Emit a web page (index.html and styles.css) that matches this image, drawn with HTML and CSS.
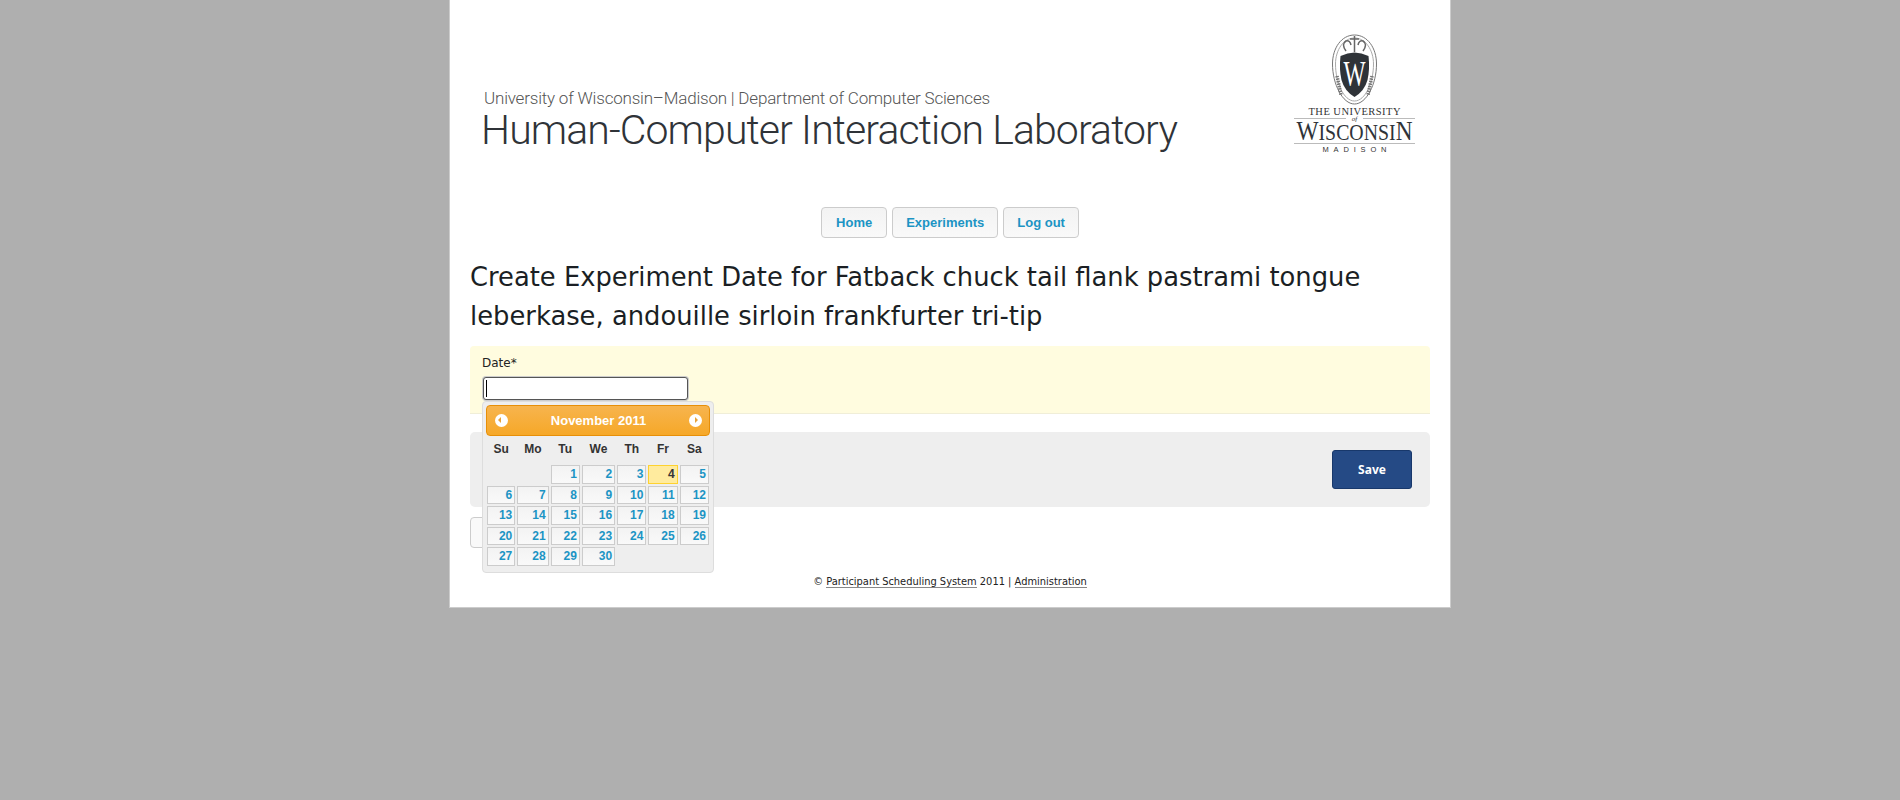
FILE: index.html
```html
<!DOCTYPE html>
<html lang="en">

<head>
    <meta charset="UTF-8">
    <title>Create Experiment Date</title>
    <link rel="stylesheet" href="styles.css">
</head>

<body>
    <div class="page">
        <div class="masthead">
            <div class="lab-name">
                <div class="lab-dept">University of Wisconsin–Madison | Department of Computer Sciences</div>
                <div class="lab-title">Human-Computer Interaction Laboratory</div>
            </div>
            <svg class="uw-logo" width="124" height="124" viewBox="0 0 124 124">
                <!-- crest -->
                <path d="M60.500 3c13 0 22 13 22 29 0 20-10 40-22 40s-22-20-22-40c0-16 9-29 22-29z" fill="#fff" stroke="#777" stroke-width="1" />
                <path d="M60.500 6c11 0 19 12 19 26 0 18-8 37-19 37s-19-19-19-37c0-14 8-26 19-26z" fill="none" stroke="#aaa" stroke-width="1" />
                <path d="M52 19q-5-7 0-10 4-1 5 4M69 19q5-7 0-10-4-1-5 4M60.500 4v16M56 7h9" fill="none" stroke="#666" stroke-width="1.500" />
                <path d="M46.500 24q14-7 28 0 1.500 13-1 24-3 11-13 17-10-6-13-17-2.500-11-1-24z" fill="#2f3338" />
                <path d="M43 44l4 19M78 44l-4 19" fill="none" stroke="#777" stroke-width="3.500" stroke-dasharray="1.500 1" />
                <text x="60.500" y="54" text-anchor="middle" class="crest-w" textLength="22" lengthAdjust="spacingAndGlyphs">W</text>
                <!-- wordmark -->
                <text x="60.500" y="83" text-anchor="middle" class="logo-the" textLength="92" lengthAdjust="spacing">THE UNIVERSITY</text>
                <path d="M0 86.500h52M69 86.500h52M0 111.500h121" stroke="#bbb" stroke-width="1" />
                <text x="60.500" y="89" text-anchor="middle" class="logo-of">of</text>
                <text x="60.500" y="108" text-anchor="middle" class="logo-wis" textLength="116" lengthAdjust="spacingAndGlyphs">W<tspan class="logo-small">ISCONSI</tspan>N</text>
                <text x="60.500" y="120" text-anchor="middle" class="logo-mad" textLength="64" lengthAdjust="spacing">MADISON</text>
            </svg>
        </div>

        <ul class="nav">
            <li><a href="#" class="nav-home">Home</a></li>
            <li><a href="#">Experiments</a></li>
            <li><a href="#">Log out</a></li>
        </ul>

        <h1>Create Experiment Date for Fatback chuck tail flank pastrami tongue leberkase, andouille sirloin frankfurter tri-tip</h1>

        <form class="date-form">
            <div class="field">
                <label for="date">Date*</label>
                <input type="text" id="date">
                <span class="caret"></span>

                <div class="datepicker">
                    <div class="dp-header">
                        <span class="dp-arrow dp-prev"></span>
                        <span class="dp-month">November 2011</span>
                        <span class="dp-arrow dp-next"></span>
                    </div>
                    <table class="dp-table">
                        <thead>
                            <tr>
                                <th>Su</th>
                                <th>Mo</th>
                                <th>Tu</th>
                                <th>We</th>
                                <th>Th</th>
                                <th>Fr</th>
                                <th>Sa</th>
                            </tr>
                        </thead>
                        <tbody>
                            <tr>
                                <td></td>
                                <td></td>
                                <td><a href="#">1</a></td>
                                <td><a href="#">2</a></td>
                                <td><a href="#">3</a></td>
                                <td><a href="#" class="today">4</a></td>
                                <td><a href="#">5</a></td>
                            </tr>
                            <tr>
                                <td><a href="#">6</a></td>
                                <td><a href="#">7</a></td>
                                <td><a href="#">8</a></td>
                                <td><a href="#">9</a></td>
                                <td><a href="#">10</a></td>
                                <td><a href="#">11</a></td>
                                <td><a href="#">12</a></td>
                            </tr>
                            <tr>
                                <td><a href="#">13</a></td>
                                <td><a href="#">14</a></td>
                                <td><a href="#">15</a></td>
                                <td><a href="#">16</a></td>
                                <td><a href="#">17</a></td>
                                <td><a href="#">18</a></td>
                                <td><a href="#">19</a></td>
                            </tr>
                            <tr>
                                <td><a href="#">20</a></td>
                                <td><a href="#">21</a></td>
                                <td><a href="#">22</a></td>
                                <td><a href="#">23</a></td>
                                <td><a href="#">24</a></td>
                                <td><a href="#">25</a></td>
                                <td><a href="#">26</a></td>
                            </tr>
                            <tr>
                                <td><a href="#">27</a></td>
                                <td><a href="#">28</a></td>
                                <td><a href="#">29</a></td>
                                <td><a href="#">30</a></td>
                                <td></td>
                                <td></td>
                                <td></td>
                            </tr>
                        </tbody>
                    </table>
                </div>
            </div>

            <div class="actions">
                <button type="button" class="save">Save</button>
            </div>
        </form>

        <!-- label of this button sits behind the open datepicker -->
        <a href="#" class="back" aria-label="Back"></a>

        <div class="footer">
            © <a href="#">Participant Scheduling System</a> 2011 | <a href="#">Administration</a>
        </div>
    </div>
</body>

</html>
```

FILE: styles.css
```css
html,
body {
    margin: 0;
    padding: 0;
}

body {
    height: 800px;
    overflow: hidden;
    background: #afafaf;
    font-family: "DejaVu Sans", sans-serif;
    color: #222;
}

.page {
    box-sizing: border-box;
    width: 1002px;
    height: 608px;
    margin: 0 auto;
    padding: 0 20px;
    background: #fff;
    border: 1px solid #ccc;
    border-top: none;
}

/* header */
.masthead {
    display: flex;
    justify-content: space-between;
    height: 207px;
}

.lab-name {
    padding: 86px 0 0 11px;
    font-family: Roboto, "Liberation Sans", sans-serif;
    font-weight: 300;
}

.lab-dept {
    margin-left: 3px;
    font-size: 17px;
    line-height: 24px;
    letter-spacing: -0.200px;
    color: #555;
}

.lab-title {
    font-size: 41px;
    line-height: 40px;
    letter-spacing: -0.900px;
    color: #2f3338;
}

.uw-logo {
    margin: 32px 12px 0 0;
}

.crest-w {
    font-family: "Liberation Serif", serif;
    font-size: 35px;
    fill: #fff;
}

.logo-the {
    font-family: "Liberation Serif", serif;
    font-size: 10.500px;
    fill: #333;
}

.logo-of {
    font-family: "Liberation Serif", serif;
    font-style: italic;
    font-size: 7px;
    fill: #333;
}

.logo-wis {
    font-family: "Liberation Serif", serif;
    font-size: 27px;
    fill: #2f3338;
}

.logo-small {
    font-size: 23px;
}

.logo-mad {
    font-family: "Liberation Sans", sans-serif;
    font-size: 7.500px;
    fill: #333;
}

/* nav */
.nav {
    display: flex;
    justify-content: center;
    gap: 5px;
    margin: 0;
    padding: 0;
    list-style: none;
}

.nav a {
    display: block;
    height: 29px;
    line-height: 29px;
    padding: 0 13px;
    background: linear-gradient(#f3f3f3, #f9f9f9);
    border: 1px solid #ccc;
    border-radius: 4px;
    font-family: "Liberation Sans", sans-serif;
    font-weight: 700;
    font-size: 13px;
    color: #1c94c4;
    text-decoration: none;
}

.nav a.nav-home {
    padding: 0 14px;
}

h1 {
    margin: 20px 0 0;
    font-weight: 400;
    font-size: 25.800px;
    line-height: 39px;
    color: #1b1f24;
}

/* form */
.date-form {
    margin-top: 10px;
}

.field {
    position: relative;
    box-sizing: border-box;
    height: 68px;
    padding: 10px 12px 0;
    background: #fffcdf;
    border-bottom: 1px solid #f0eed8;
    border-radius: 4px 4px 0 0;
}

.field label {
    display: block;
    font-size: 12px;
    line-height: 14px;
    color: #222;
}

.field input {
    display: block;
    box-sizing: border-box;
    width: 205px;
    height: 23px;
    margin: 7px 0 0 1px;
    padding: 0 2px;
    background: #fff;
    border: 1px solid #555;
    border-radius: 3px;
    box-shadow: 0 0 0 1px #ccc;
    outline: none;
}

/* the text cursor of the focused input */
.caret {
    position: absolute;
    top: 34px;
    left: 16px;
    width: 1px;
    height: 17px;
    background: #000;
}

.actions {
    display: flex;
    justify-content: flex-end;
    box-sizing: border-box;
    height: 75px;
    margin-top: 18px;
    padding: 18px 18px 0 0;
    background: #eee;
    border-radius: 5px;
}

.save {
    width: 80px;
    height: 39px;
    background: #254a85;
    border: 1px solid #18386b;
    border-radius: 3px;
    font-family: "Noto Sans", sans-serif;
    font-weight: 700;
    font-size: 12px;
    color: #fff;
}

.back {
    display: block;
    box-sizing: border-box;
    width: 100px;
    height: 31px;
    margin-top: 10px;
    background: #f9f9f9;
    border: 1px solid #ccc;
    border-radius: 4px;
}

/* datepicker, opens over the rest of the form */
.datepicker {
    position: absolute;
    top: 55px;
    left: 12px;
    z-index: 2;
    box-sizing: border-box;
    width: 232px;
    height: 172px;
    padding: 3px;
    background: #eee;
    border: 1px solid #ddd;
    border-radius: 4px;
    font-family: "Liberation Sans", sans-serif;
}

.dp-header {
    display: flex;
    align-items: center;
    justify-content: space-between;
    box-sizing: border-box;
    height: 31px;
    padding: 0 7px 0 8px;
    background: linear-gradient(#f7b44e, #f6a828);
    border: 1px solid #e78f08;
    border-radius: 4px;
}

.dp-month {
    font-weight: 700;
    font-size: 13px;
    color: #fff;
}

.dp-arrow {
    position: relative;
    width: 13px;
    height: 13px;
    background: #fff;
    border-radius: 50%;
}

.dp-arrow::after {
    content: "";
    position: absolute;
    top: 3px;
    border: 3.500px solid transparent;
}

.dp-prev::after {
    left: 0;
    border-right-color: #e8a33a;
}

.dp-next::after {
    left: 6px;
    border-left-color: #e8a33a;
}

.dp-table {
    border-collapse: collapse;
    table-layout: fixed;
    width: 224px;
    font-size: 12px;
}

.dp-table th {
    height: 26px;
    padding: 0 0 2px;
    font-weight: 700;
    color: #333;
}

.dp-table th:nth-child(1) { width: 30px; }
.dp-table th:nth-child(2) { width: 33px; }
.dp-table th:nth-child(3) { width: 31px; }
.dp-table th:nth-child(4) { width: 35px; }
.dp-table th:nth-child(5) { width: 31px; }
.dp-table th:nth-child(6) { width: 31px; }
.dp-table th:nth-child(7) { width: 31px; }

.dp-table td {
    padding: 1px;
}

.dp-table td a {
    display: block;
    box-sizing: border-box;
    height: 18.600px;
    line-height: 16.600px;
    padding: 0 2px;
    text-align: right;
    font-weight: 700;
    color: #1c94c4;
    text-decoration: none;
    background: linear-gradient(#f3f3f3, #f9f9f9);
    border: 1px solid #ccc;
}

.dp-table td a.today {
    background: #ffeb9e;
    border-color: #fed22f;
    color: #363636;
}

/* footer */
.footer {
    margin-top: 27px;
    font-size: 9.900px;
    line-height: 14px;
    text-align: center;
    color: #222;
}

.footer a {
    color: #222;
    text-decoration: none;
    border-bottom: 1px solid #888;
}
```
